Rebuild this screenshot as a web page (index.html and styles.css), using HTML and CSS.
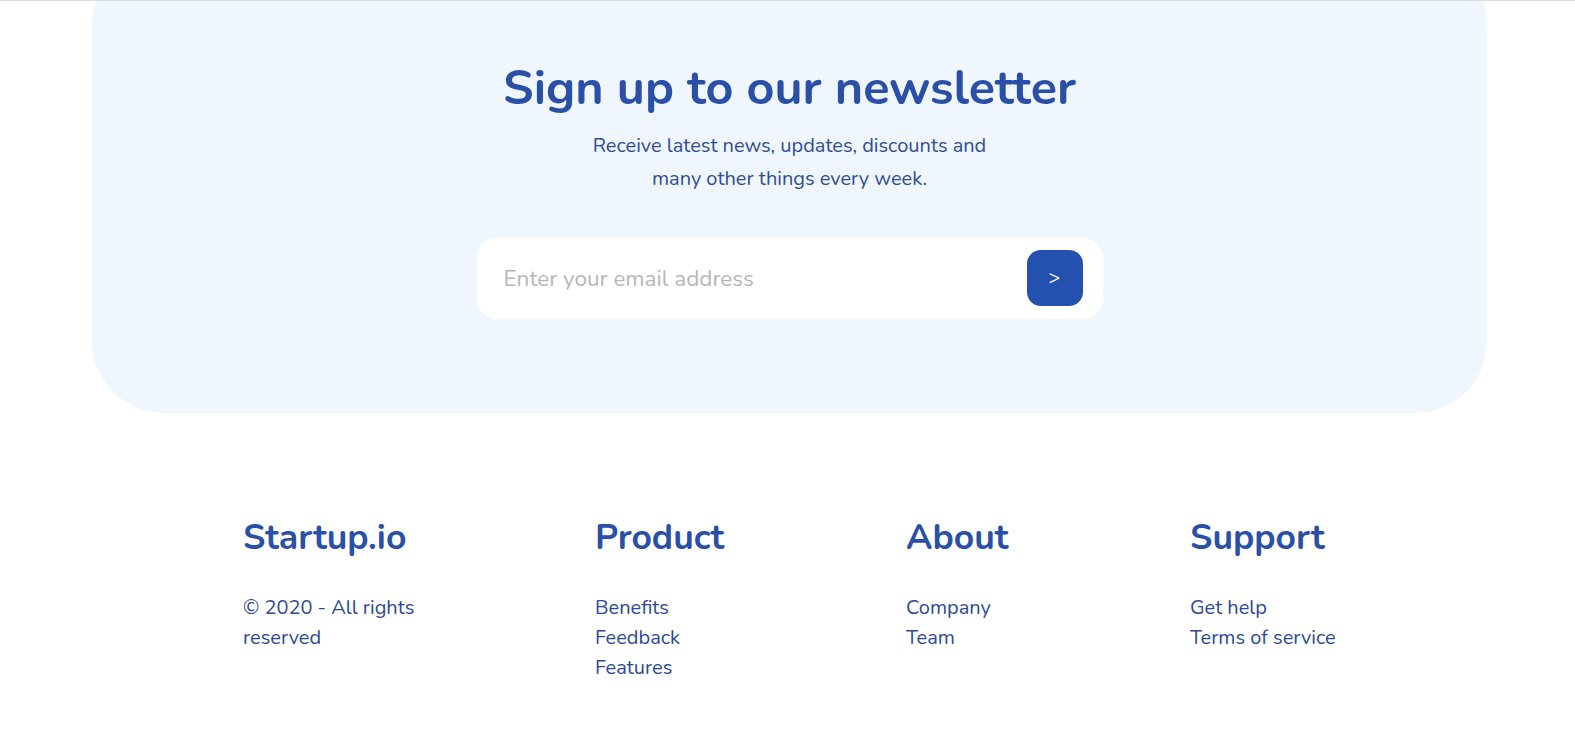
FILE: index.html
```html
<!DOCTYPE html>
<html lang="en">
<head>
<meta charset="utf-8">
<title>Newsletter</title>
<link rel="stylesheet" href="styles.css">
</head>
<body>
<section class="newsletter">
  <h1 class="newsletter-title">Sign up to our newsletter</h1>
  <p class="newsletter-text">Receive latest news, updates, discounts and<br>many other things every week.</p>
  <form class="subscribe">
    <input class="subscribe-input" type="email" placeholder="Enter your email address">
    <button class="subscribe-btn" type="button">&gt;</button>
  </form>
</section>
<footer class="footer">
  <div class="footer-col">
    <h2 class="footer-heading">Startup.io</h2>
    <p class="footer-copy">© 2020 - All rights reserved</p>
  </div>
  <div class="footer-col">
    <h2 class="footer-heading">Product</h2>
    <ul class="footer-links">
      <li>Benefits</li>
      <li>Feedback</li>
      <li>Features</li>
    </ul>
  </div>
  <div class="footer-col">
    <h2 class="footer-heading">About</h2>
    <ul class="footer-links">
      <li>Company</li>
      <li>Team</li>
    </ul>
  </div>
  <div class="footer-col">
    <h2 class="footer-heading">Support</h2>
    <ul class="footer-links">
      <li>Get help</li>
      <li>Terms of service</li>
    </ul>
  </div>
</footer>
</body>
</html>
```
FILE: styles.css
```css
* { box-sizing: border-box; }

html, body {
  margin: 0;
  padding: 0;
  background: #ffffff;
  overflow: hidden;
}

body {
  font-family: "Nunito", "Lato", "Open Sans", sans-serif;
  color: #2c4a94;
  height: 754px;
}

body::before {
  content: "";
  position: fixed;
  top: 0;
  left: 0;
  right: 0;
  height: 1px;
  background: #d9dce1;
  z-index: 5;
}

.newsletter {
  margin: -47px 88px 0 92px;
  padding: 107px 0 94px;
  background: #f0f6fe;
  border-radius: 72px;
  display: flex;
  flex-direction: column;
  align-items: center;
}

.newsletter-title {
  margin: 0;
  font-size: 48.5px;
  line-height: 57.6px;
  font-weight: 700;
  color: #2a4fa7;
}

.newsletter-text {
  margin: 11px 0 0;
  font-size: 20px;
  line-height: 33px;
  text-align: center;
  color: #2f4c93;
}

.subscribe {
  margin-top: 43px;
  width: 626px;
  height: 81px;
  background: #ffffff;
  border-radius: 20px;
  display: flex;
  align-items: center;
  padding: 0 20px 0 27px;
}

.subscribe-input {
  flex: 1;
  border: 0;
  outline: 0;
  background: transparent;
  font-family: inherit;
  font-size: 22.5px;
  color: #333;
  padding: 0;
}

.subscribe-input::placeholder {
  color: #b7b7b7;
}

.subscribe-btn {
  width: 56px;
  height: 56px;
  border: 0;
  border-radius: 14px;
  background: #2450b0;
  color: #ffffff;
  font-family: inherit;
  font-size: 19px;
  padding: 0;
}

.footer {
  display: grid;
  grid-template-columns: 352px 311px 284px auto;
  padding: 104px 0 0 243px;
}

.footer-heading {
  margin: 0;
  font-size: 35.5px;
  line-height: 42px;
  font-weight: 700;
  color: #2a4fa7;
}

.footer-copy {
  margin: 34px 0 0;
  width: 185px;
  font-size: 20px;
  line-height: 30px;
}

.footer-links {
  list-style: none;
  margin: 34px 0 0;
  padding: 0;
  font-size: 20px;
  line-height: 30px;
}
```
